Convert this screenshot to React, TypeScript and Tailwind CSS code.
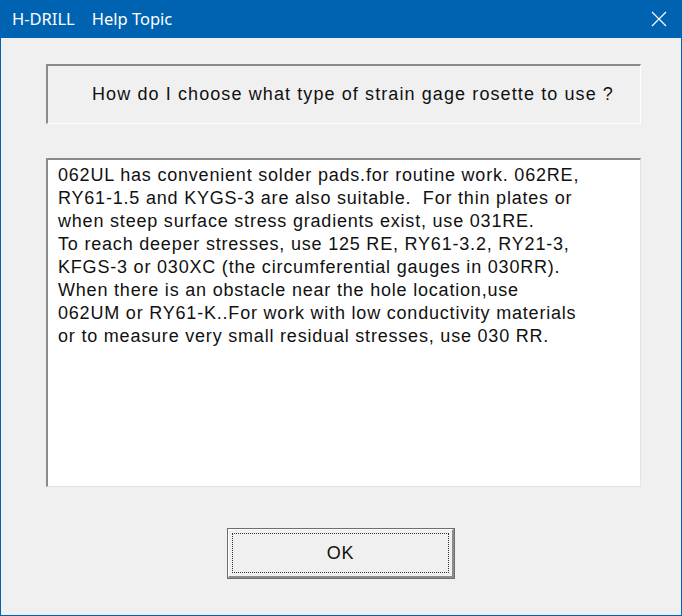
import React from 'react';

const answerLines = [
  '062UL has convenient solder pads.for routine work. 062RE,',
  'RY61-1.5 and KYGS-3 are also suitable.  For thin plates or',
  'when steep surface stress gradients exist, use 031RE.',
  'To reach deeper stresses, use 125 RE, RY61-3.2, RY21-3,',
  'KFGS-3 or 030XC (the circumferential gauges in 030RR).',
  'When there is an obstacle near the hole location,use',
  '062UM or RY61-K..For work with low conductivity materials',
  'or to measure very small residual stresses, use 030 RR.',
];

const TitleBar: React.FC = () => (
  <div className="flex h-[38px] items-center justify-between bg-[#0063b1] pl-3 text-white">
    <div className="flex items-center text-[16.5px] font-['Noto_Sans',sans-serif] leading-none">
      <span>H-DRILL</span>
      <span className="ml-[17px]">Help Topic</span>
    </div>
    <div className="flex h-full w-[46px] items-center justify-center">
      <svg width="16" height="16" viewBox="0 0 16 16">
        <path d="M1 1 L15 15 M15 1 L1 15" stroke="white" strokeWidth="1.2" />
      </svg>
    </div>
  </div>
);

export default function App() {
  return (
    <div className="h-[616px] w-[682px] overflow-hidden bg-[#0063b1]">
      <div className="flex h-full flex-col">
        <TitleBar />
        <div className="mx-px mb-px flex flex-1 flex-col items-center bg-[#f0f0f0] font-['Liberation_Sans',Arial,sans-serif] text-[18px] tracking-[0.8px] text-[#111]">
          {/* question header */}
          <div className="mt-[26px] ml-[45px] flex h-[60px] w-[595px] items-center justify-center self-start border-t-2 border-l-2 border-b border-r border-t-[#8a8a8a] border-l-[#8a8a8a] border-b-white border-r-white pl-[18px]">
            <span className="whitespace-pre tracking-[1.1px]">How do I choose what type of strain gage rosette to use ?</span>
          </div>

          {/* answer text */}
          <div className="mt-[34px] ml-[45px] h-[329px] w-[595px] self-start border-t-2 border-l-2 border-b border-r border-t-[#8a8a8a] border-l-[#8a8a8a] border-b-[#e3e3e3] border-r-[#e3e3e3] bg-white pl-[10px] pt-[4px] leading-[23px]">
            {answerLines.map(line => (
              <div key={line} className="whitespace-pre">{line}</div>
            ))}
          </div>

          {/* OK button */}
          <button className="mt-[41px] h-[51px] w-[228px] border border-[#6e6e6e] bg-[#f0f0f0] p-0">
            <div className="h-full w-full border-t border-l border-b-2 border-r-2 border-t-white border-l-white border-b-[#8c8c8c] border-r-[#8c8c8c] p-[3px]">
              <div className="flex h-full w-full items-center justify-center border border-dotted border-[#333]">
                <span>OK</span>
              </div>
            </div>
          </button>
        </div>
      </div>
    </div>
  );
}
